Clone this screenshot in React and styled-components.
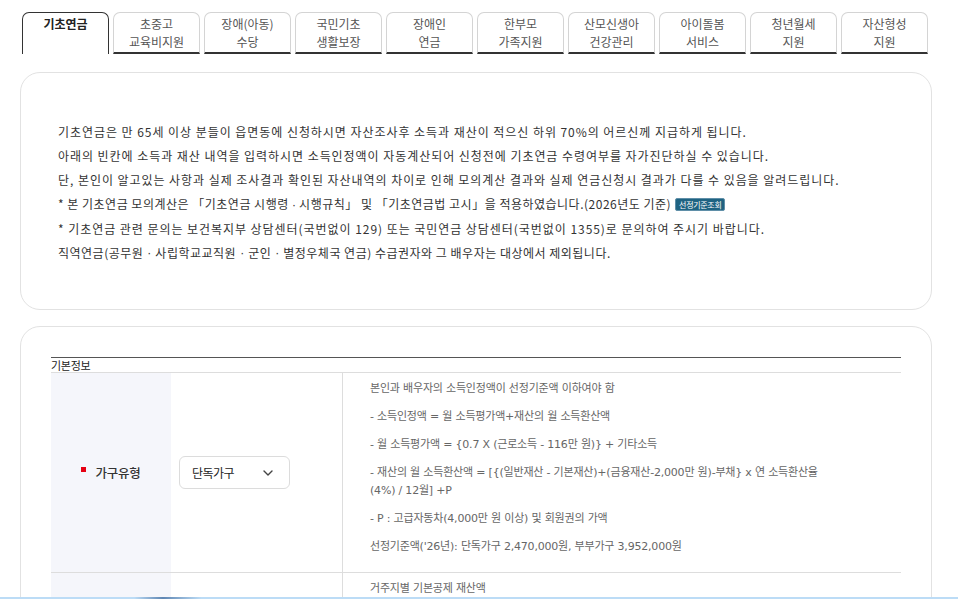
import React from "react";
import styled, { createGlobalStyle } from "styled-components";

const Global = createGlobalStyle`
  html, body { margin: 0; padding: 0; background: #fff; }
  body { font-family: "Noto Sans CJK KR", "Noto Sans", sans-serif; color: #333; }
  * { box-sizing: border-box; }
`;

const Page = styled.div`
  padding: 12px 26px 40px 20px;
  width: 958px;
`;

const TabList = styled.ul`
  list-style: none;
  margin: 0 0 0 2px;
  padding: 0;
  display: flex;
  gap: 4px;
`;

const Tab = styled.li`
  width: 87px;
  height: 42px;
  border: 1px solid ${(p) => (p.$active ? "#333" : "#d4d4d4")};
  border-bottom: ${(p) => (p.$active ? "none" : "2px solid #333")};
  border-radius: 7px 7px 0 0;
  padding-top: 2px;
  text-align: center;
  font-size: 12px;
  line-height: 18px;
  font-weight: ${(p) => (p.$active ? 700 : 400)};
  color: ${(p) => (p.$active ? "#222" : "#555")};
  white-space: pre-line;
`;

const Card = styled.section`
  border: 1px solid #e2e2e2;
  border-radius: 20px;
  background: #fff;
  margin-top: ${(p) => p.$top}px;
`;

const IntroCard = styled(Card)`
  height: 238px;
  padding: 47px 20px 0 37px;
`;

const IntroLine = styled.p`
  margin: 0;
  font-size: 12px;
  line-height: 24px;
  letter-spacing: ${(p) => (p.$tight ? "0.5px" : "0.95px")};
  color: #333;
  display: flex;
  align-items: center;
  gap: 4px;
  white-space: nowrap;
`;

const Dot = styled.span`
  font-family: "Liberation Sans", sans-serif;
  letter-spacing: 0;
`;

const Badge = styled.span`
  display: inline-block;
  background: #1f6382;
  color: #fff;
  font-size: 8px;
  line-height: 11px;
  padding: 0 3px;
  border-radius: 2px;
  border: 1px solid #5f8fa8;
  letter-spacing: -0.3px;
`;

const FormCard = styled(Card)`
  padding: 30px 30px 0 30px;
  height: 300px;
`;

const TableWrap = styled.div`
  border-top: 1px solid #555;
`;

const Caption = styled.div`
  font-size: 11px;
  line-height: 14px;
  letter-spacing: -0.3px;
  color: #222;
`;

const Table = styled.div`
  border-top: 1px solid #ddd;
`;

const Row = styled.div`
  display: grid;
  grid-template-columns: 120px 172px 1fr;
  border-bottom: 1px solid #ddd;
  min-height: ${(p) => p.$h || 0}px;
`;

const Th = styled.div`
  background: #f5f6fb;
  display: flex;
  align-items: center;
  justify-content: center;
  gap: 9px;
  font-size: 12.5px;
  font-weight: 500;
  color: #333;
  letter-spacing: -0.2px;
`;

const Required = styled.span`
  width: 5px;
  height: 5px;
  background: #e60012;
  margin-top: -6px;
`;

const InputCell = styled.div`
  display: flex;
  align-items: center;
  padding-left: 8px;
  border-right: 1px solid #ddd;
`;

const Select = styled.div`
  width: 111px;
  height: 33px;
  border: 1px solid #dcdcdc;
  border-radius: 6px;
  display: flex;
  align-items: center;
  justify-content: space-between;
  padding: 0 16px 0 12px;
  font-size: 12px;
  letter-spacing: -0.5px;
  color: #222;
`;

const Desc = styled.div`
  padding: 7px 64px 0 27px;
`;

const DescP = styled.p`
  margin: 0 0 10px;
  font-family: "DejaVu Sans", "Noto Sans CJK KR", sans-serif;
  font-size: 11px;
  line-height: 18px;
  letter-spacing: -0.2px;
  word-break: keep-all;
  color: #666;
`;

const BottomBar = styled.div`
  position: fixed;
  left: 0;
  right: 0;
  bottom: 0;
  height: 2px;
  background: linear-gradient(90deg, #bcdcf6 0%, #bcdcf6 14%, #5f86b3 17%, #bcdcf6 21%, #bcdcf6 100%);
`;

const tabs = [
  "기초연금",
  "초중고\n교육비지원",
  "장애(아동)\n수당",
  "국민기초\n생활보장",
  "장애인\n연금",
  "한부모\n가족지원",
  "산모신생아\n건강관리",
  "아이돌봄\n서비스",
  "청년월세\n지원",
  "자산형성\n지원",
];

const Chevron = () => (
  <svg width="10" height="6" viewBox="0 0 10 6" fill="none">
    <path d="M1 1l4 4 4-4" stroke="#444" strokeWidth="1.4" strokeLinecap="round" strokeLinejoin="round" />
  </svg>
);

export default function App() {
  return (
    <>
      <Global />
      <Page>
        <TabList>
          {tabs.map((t, i) => (
            <Tab key={t} $active={i === 0}>
              {t}
            </Tab>
          ))}
        </TabList>

        <IntroCard $top={18}>
          <IntroLine>기초연금은 만 65세 이상 분들이 읍면동에 신청하시면 자산조사후 소득과 재산이 적으신 하위 70%의 어르신께 지급하게 됩니다.</IntroLine>
          <IntroLine>아래의 빈칸에 소득과 재산 내역을 입력하시면 소득인정액이 자동계산되어 신청전에 기초연금 수령여부를 자가진단하실 수 있습니다.</IntroLine>
          <IntroLine>단, 본인이 알고있는 사항과 실제 조사결과 확인된 자산내역의 차이로 인해 모의계산 결과와 실제 연금신청시 결과가 다를 수 있음을 알려드립니다.</IntroLine>
          <IntroLine $tight>
            <span>
              * 본 기초연금 모의계산은 「기초연금 시행령 <Dot>·</Dot> 시행규칙」 및 「기초연금법 고시」을 적용하였습니다.(2026년도 기준)
            </span>
            <Badge>선정기준조회</Badge>
          </IntroLine>
          <IntroLine>* 기초연금 관련 문의는 보건복지부 상담센터(국번없이 129) 또는 국민연금 상담센터(국번없이 1355)로 문의하여 주시기 바랍니다.</IntroLine>
          <IntroLine $tight>
            직역연금(공무원<Dot>·</Dot>사립학교교직원<Dot>·</Dot>군인<Dot>·</Dot>별정우체국 연금) 수급권자와 그 배우자는 대상에서 제외됩니다.
          </IntroLine>
        </IntroCard>

        <FormCard $top={16}>
          <TableWrap>
            <Caption>기본정보</Caption>
            <Table>
              <Row $h={200}>
                <Th>
                  <Required />
                  가구유형
                </Th>
                <InputCell>
                  <Select>
                    <span>단독가구</span>
                    <Chevron />
                  </Select>
                </InputCell>
                <Desc>
                  <DescP>본인과 배우자의 소득인정액이 선정기준액 이하여야 함</DescP>
                  <DescP>- 소득인정액 = 월 소득평가액+재산의 월 소득환산액</DescP>
                  <DescP>- 월 소득평가액 = {"{"}0.7 X (근로소득 - 116만 원){"}"} + 기타소득</DescP>
                  <DescP>- 재산의 월 소득환산액 = [{"{"}(일반재산 - 기본재산)+(금융재산-2,000만 원)-부채{"}"} x 연 소득환산율 (4%) / 12월] +P</DescP>
                  <DescP>- P : 고급자동차(4,000만 원 이상) 및 회원권의 가액</DescP>
                  <DescP>선정기준액('26년): 단독가구 2,470,000원, 부부가구 3,952,000원</DescP>
                </Desc>
              </Row>
              <Row $h={60}>
                <Th />
                <InputCell />
                <Desc>
                  <DescP>거주지별 기본공제 재산액</DescP>
                </Desc>
              </Row>
            </Table>
          </TableWrap>
        </FormCard>
      </Page>
      <BottomBar />
    </>
  );
}
